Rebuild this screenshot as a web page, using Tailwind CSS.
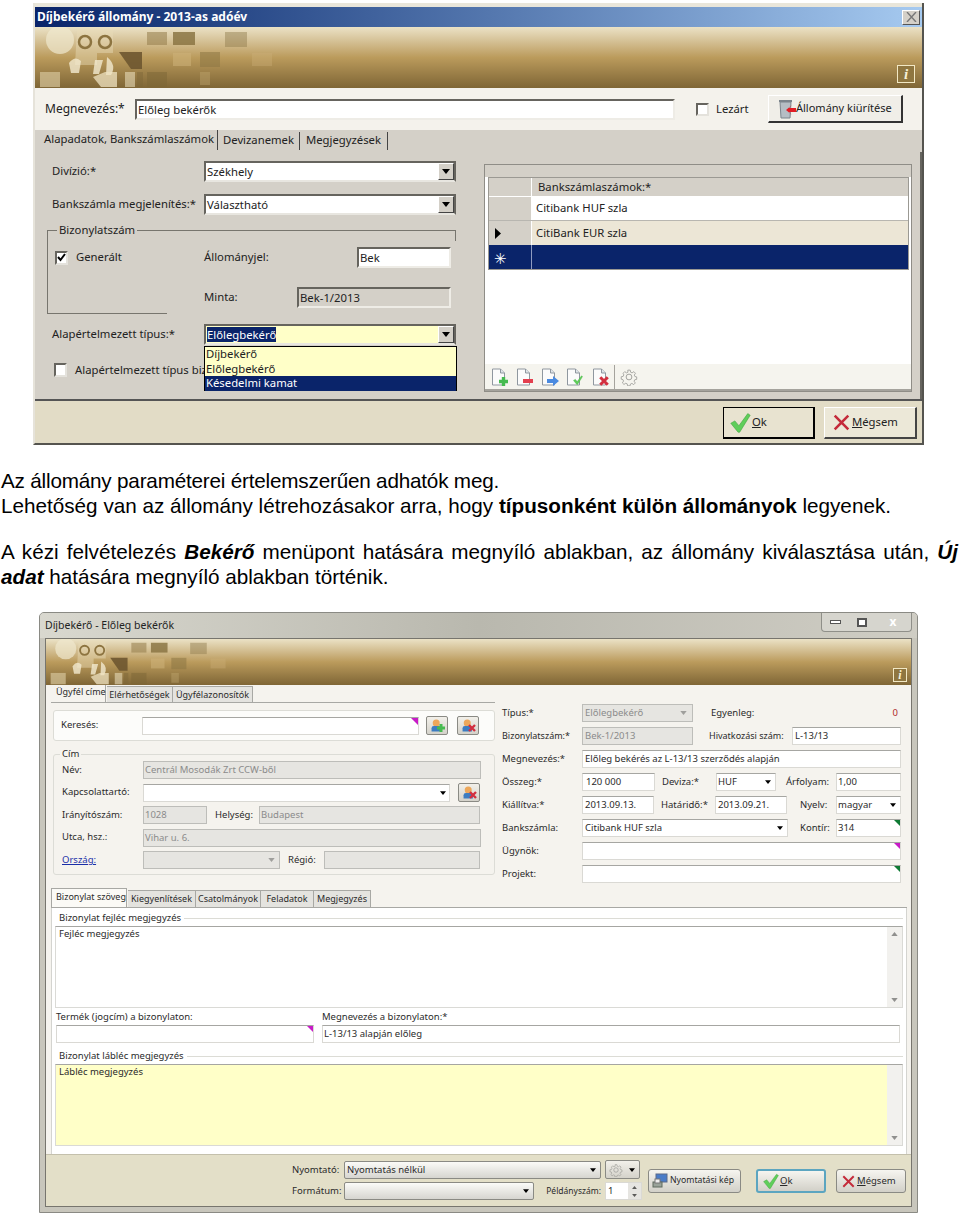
<!DOCTYPE html>
<html lang="hu">
<head>
<meta charset="utf-8"/>
<title>Díjbekérő állomány</title>
<script src="https://cdn.jsdelivr.net/npm/@tailwindcss/browser@4"></script>
</head>
<body class="bg-white w-[960px] h-[1213px] overflow-hidden font-['Liberation_Sans',Arial,sans-serif] text-black">

<!-- shared icons -->
<svg class="hidden">
  <symbol id="mosaic" viewBox="0 0 300 61">
    <circle cx="25" cy="13" r="14" fill="#f0e8cf" opacity=".7"/>
    <path d="M42 2h36v24H62v12H40z" fill="#e9dcb8" opacity=".45"/>
    <circle cx="50" cy="15" r="6" fill="none" stroke="#8d7440" stroke-width="2.5"/>
    <circle cx="70" cy="15" r="6" fill="none" stroke="#8d7440" stroke-width="2.5"/>
    <path d="M34 36q6-8 12-2l-2 12h-8zM60 33l8 0-4 14h-6zM72 30q10 8 4 18h-5z" fill="#f3ead0" opacity=".8"/>
    <rect x="112" y="5" width="20" height="13" fill="#947c4a" opacity=".55"/>
    <rect x="138" y="5" width="22" height="13" fill="#86703f" opacity=".8"/>
    <rect x="190" y="5" width="22" height="15" fill="#8f7a4c" opacity=".45"/>
    <path d="M84 25h23v17H96z" fill="#6e5730" opacity=".9"/>
    <rect x="138" y="26" width="18" height="13" fill="#cdb27a" opacity=".55"/>
    <rect x="165" y="25" width="20" height="15" fill="#8d7644" opacity=".55"/>
    <rect x="217" y="26" width="20" height="13" fill="#cdb27a" opacity=".35"/>
    <rect x="5" y="45" width="20" height="15" fill="#d5c49a" opacity=".7"/>
    <path d="M58 50l12-5h12v15H66z" fill="#efe3c2" opacity=".75"/>
    <rect x="90" y="45" width="10" height="15" fill="#efe3c2" opacity=".55"/>
    <rect x="102" y="45" width="6" height="15" fill="#7d6638" opacity=".45"/>
    <rect x="112" y="45" width="20" height="15" fill="#7c6636" opacity=".5"/>
    <rect x="165" y="45" width="10" height="13" fill="#c4aa72" opacity=".4"/>
  </symbol>
  <symbol id="tri" viewBox="0 0 8 5"><path d="M0 0h8L4 5z" fill="#000"/></symbol>
  <symbol id="doc" viewBox="0 0 16 18"><path d="M1.5 1h8l4 4v12h-12z" fill="#fbfbfb" stroke="#8f979f"/><path d="M9.5 1v4h4" fill="#dfe5ea" stroke="#8f979f"/></symbol>
  <symbol id="gear" viewBox="0 0 20 20"><g fill="none" stroke="#9a9a96"><circle cx="10" cy="10" r="3.2"/><path d="M8.5 1.5h3l.5 2.6 1.8.8 2.2-1.5 2 2-1.5 2.2.8 1.8 2.2.5v3l-2.4.5-.8 1.8 1.5 2.2-2 2-2.2-1.5-1.8.8-.5 2.2h-3l-.5-2.4-1.8-.8-2.2 1.5-2-2 1.5-2.2-.8-1.8-2.1-.5v-3l2.4-.5.8-1.8L2.7 5.4l2-2 2.2 1.5 1.8-.8z" transform="translate(1 1) scale(.9)"/></g></symbol>
  <symbol id="check" viewBox="0 0 26 26"><path d="M1 14l5-3 5 6L22 2l3 2-13 21h-2z" fill="#5fce5a" stroke="#3fa23c" stroke-width=".7"/></symbol>
  <symbol id="cross" viewBox="0 0 20 20"><path d="M2 2l16 16M18 2L2 18" stroke="#c42a3a" stroke-width="3" fill="none"/></symbol>
  <symbol id="person" viewBox="0 0 18 18"><circle cx="8" cy="5" r="4.5" fill="#eda75a"/><path d="M2 16v-4q0-3 3-3h6q3 0 3 3v4z" fill="#3d7cc0"/></symbol>
  <symbol id="badge-x" viewBox="0 0 8 8"><path d="M1 1l6 6M7 1L1 7" stroke="#d32f3f" stroke-width="2.4"/></symbol>
  <symbol id="badge-plus" viewBox="0 0 8 8"><path d="M4 0v8M0 4h8" stroke="#46bb50" stroke-width="3"/></symbol>
</svg>

<!-- first dialog -->
<div class="ml-[33px] pt-[3px] w-[891px] text-[11.3px] font-['Noto_Sans',sans-serif] text-[#222]">
  <div class="h-[442px] flex flex-col bg-[#d4d0c8] border-l-2 border-r-2 border-l-[#e6e3da] border-r-[#55544f] border-b-2 border-b-[#55544f]">
    <div class="h-[4px] bg-[#e9e6da]"></div>
    <div class="h-[20px] shrink-0 flex items-center justify-between bg-gradient-to-r from-[#0a246a] to-[#a6caf0] pl-[2px] pr-[2px]">
      <span class="text-white font-bold text-[12px]">Díjbekérő állomány - 2013-as adóév</span>
      <span class="w-[18px] h-[15px] bg-[#d4d0c8] border border-t-white border-l-white border-r-[#555] border-b-[#555] flex items-center justify-center">
        <svg class="w-[11px] h-[10px]" viewBox="0 0 11 10"><path d="M1 0l9 10M10 0L1 10" stroke="#777" stroke-width="1.4"/></svg>
      </span>
    </div>
    <div class="relative h-[61px] shrink-0 bg-gradient-to-b from-[#ebe2c6] via-[#bb9b5c] to-[#7f6636]">
      <svg class="absolute left-0 top-0 w-[300px] h-[61px]"><use href="#mosaic"/></svg>
      <span class="absolute right-[7px] top-[38px] w-[18px] h-[18px] border border-[#f2e8c4] bg-[#8f7640] text-[#f7f0d6] flex items-center justify-center font-['Liberation_Serif',serif] font-bold italic text-[15px]">i</span>
    </div>
    <div class="h-[42px] shrink-0 flex items-center bg-[#f4f2ec] pl-[10px]">
      <span class="w-[90px] text-[12px]">Megnevezés:*</span>
      <div class="w-[540px] h-[21px] bg-white border-2 border-t-[#66645e] border-l-[#66645e] border-r-[#eeece6] border-b-[#eeece6] px-[1px] leading-[17px]">Előleg bekérők</div>
      <span class="ml-[21px] w-[13px] h-[13px] bg-white border-2 border-t-[#66645e] border-l-[#66645e] border-r-[#e4e2dc] border-b-[#e4e2dc]"></span>
      <span class="ml-[7px] w-[35px]">Lezárt</span>
      <div class="ml-[17px] w-[135px] h-[28px] flex items-center pl-[9px] bg-[#f0eee8] border-t border-l border-t-white border-l-white border-r-2 border-b-2 border-r-[#333] border-b-[#333]">
        <svg class="w-[18px] h-[21px] shrink-0" viewBox="0 0 18 21"><path d="M2 4h11l-1 16H3z" fill="#b5bdc4" stroke="#7b848c"/><path d="M1 3h13" stroke="#7b848c" stroke-width="2"/><path d="M18 10h-7l3-3-6 5 6 5-3-3h7z" fill="#e21c25"/></svg>
        <span class="whitespace-nowrap ml-[0px] text-[11px]">Állomány kiürítése</span>
      </div>
    </div>
    <!-- tabs -->
    <div class="h-[20px] shrink-0 flex items-end pl-[3px]">
      <span class="w-[180px] h-[20px] pl-[6px] leading-[17px] border-r border-r-[#444] whitespace-nowrap">Alapadatok, Bankszámlaszámok</span>
      <span class="w-[82px] h-[18px] text-center leading-[16px] border-r border-r-[#444] whitespace-nowrap">Devizanemek</span>
      <span class="w-[88px] h-[18px] text-center leading-[16px] border-r border-r-[#444] whitespace-nowrap">Megjegyzések</span>
    </div>
    <!-- tab body -->
    <div class="h-[249px] shrink-0 flex">
      <div class="w-[449px] shrink-0 relative">
        <div class="ml-[17px] mt-[11px] flex items-center h-[21px]">
          <span class="w-[152px]">Divízió:*</span>
          <div class="w-[252px] h-[21px] flex bg-white border-2 border-t-[#66645e] border-l-[#66645e] border-r-[#66645e] border-b-[#e8e6e0]">
            <span class="flex-1 pl-[1px] leading-[17px]">Székhely</span>
            <span class="w-[16px] bg-[#d4d0c8] border border-t-white border-l-white border-r-[#444] border-b-[#444] flex items-center justify-center"><svg class="w-[8px] h-[5px]"><use href="#tri"/></svg></span>
          </div>
        </div>
        <div class="ml-[17px] mt-[12px] flex items-center h-[21px]">
          <span class="w-[152px] whitespace-nowrap">Bankszámla megjelenítés:*</span>
          <div class="w-[252px] h-[21px] flex bg-white border-2 border-t-[#66645e] border-l-[#66645e] border-r-[#66645e] border-b-[#e8e6e0]">
            <span class="flex-1 pl-[1px] leading-[17px]">Választható</span>
            <span class="w-[16px] bg-[#d4d0c8] border border-t-white border-l-white border-r-[#444] border-b-[#444] flex items-center justify-center"><svg class="w-[8px] h-[5px]"><use href="#tri"/></svg></span>
          </div>
        </div>
        <!-- Bizonylatszám group -->
        <div class="relative ml-[12px] mt-[15px] w-[409px] h-[84px] border-t border-l border-[#77756e]">
          <span class="absolute left-[9px] -top-[9px] bg-[#d4d0c8] px-[2px] leading-[16px]">Bizonylatszám</span>
          <span class="absolute -right-[0px] top-0 w-px h-[10px] bg-[#77756e]"></span>
          <span class="absolute left-0 bottom-0 w-[119px] h-px bg-[#77756e]"></span>
          <div class="mt-[16px] ml-[7px] h-[21px] flex items-center">
            <span class="w-[13px] h-[14px] shrink-0 bg-white border-2 border-t-[#66645e] border-l-[#66645e] border-r-[#e4e2dc] border-b-[#e4e2dc] flex items-center justify-center">
              <svg class="w-[9px] h-[9px]" viewBox="0 0 9 9"><path d="M1 4l2.5 3L8 1" fill="none" stroke="#000" stroke-width="2"/></svg>
            </span>
            <span class="ml-[8px] w-[128px]">Generált</span>
            <span class="w-[153px]">Állományjel:</span>
            <div class="w-[94px] h-[21px] bg-white border-2 border-t-[#66645e] border-l-[#66645e] border-r-[#eeece6] border-b-[#eeece6] pl-[1px] leading-[17px]">Bek</div>
          </div>
          <div class="mt-[19px] ml-[156px] h-[21px] flex items-center">
            <span class="w-[93px]">Minta:</span>
            <div class="w-[154px] h-[21px] bg-[#d4d0c8] border-2 border-t-[#66645e] border-l-[#66645e] border-r-[#eeece6] border-b-[#eeece6] pl-[1px] leading-[17px]">Bek-1/2013</div>
          </div>
        </div>
        <div class="ml-[17px] mt-[10px] flex items-center h-[21px]">
          <span class="w-[152px] whitespace-nowrap">Alapértelmezett típus:*</span>
          <div class="w-[252px] h-[21px] flex bg-[#ffffc8] border-2 border-t-[#66645e] border-l-[#66645e] border-r-[#66645e] border-b-[#e8e6e0]">
            <span class="flex-1 pl-[1px] leading-[17px]"><span class="bg-[#0a246a] text-white">Előlegbekérő</span></span>
            <span class="w-[16px] bg-[#d4d0c8] border border-t-white border-l-white border-r-[#444] border-b-[#444] flex items-center justify-center"><svg class="w-[8px] h-[5px]"><use href="#tri"/></svg></span>
          </div>
        </div>
        <div class="ml-[19px] mt-[18px] h-[14px] flex items-center">
          <span class="w-[13px] h-[14px] shrink-0 bg-white border-2 border-t-[#66645e] border-l-[#66645e] border-r-[#e4e2dc] border-b-[#e4e2dc]"></span>
          <span class="ml-[8px] whitespace-nowrap">Alapértelmezett típus bizonylat</span>
        </div>
        <!-- open combo list -->
        <div class="absolute left-[169px] top-[196px] w-[253px] h-[45px] border border-black bg-[#ffffc8] leading-[14.5px]">
          <div class="pl-[1px]">Díjbekérő</div>
          <div class="pl-[1px]">Előlegbekérő</div>
          <div class="pl-[1px] bg-[#0a246a] text-white">Késedelmi kamat</div>
        </div>
      </div>
      <!-- bank account grid -->
      <div class="w-[428px] h-[228px] mt-[14px] ml-[0px] flex flex-col bg-white border border-[#8f8d87]">
        <div class="h-[12px] bg-[#d4d0c8]"></div>
        <div class="flex flex-col ml-[3px] mr-[2px] border border-[#9b9993]">
          <div class="h-[18px] flex bg-[#d4d0c8]">
            <span class="w-[43px] border-r border-r-white"></span>
            <span class="flex-1 pl-[6px] leading-[17px]">Bankszámlaszámok:*</span>
          </div>
          <div class="h-[24px] flex bg-white">
            <span class="w-[43px] bg-[#d4d0c8] border-r border-r-white border-t border-t-white"></span>
            <span class="flex-1 pl-[4px] leading-[23px]">Citibank HUF szla</span>
          </div>
          <div class="h-[25px] flex bg-[#ece6d6] border-t border-t-[#b8b6b0]">
            <span class="w-[43px] bg-[#d4d0c8] border-r border-r-white flex items-center pl-[6px]">
              <svg class="w-[6px] h-[11px]" viewBox="0 0 6 11"><path d="M0 0l6 5.5L0 11z" fill="#000"/></svg>
            </span>
            <span class="flex-1 pl-[4px] leading-[24px]">CitiBank EUR szla</span>
          </div>
          <div class="h-[24px] flex bg-[#0a246a] text-white">
            <span class="w-[43px] border-r border-r-[#8f9bc0] pl-[5px] leading-[26px] text-[15px]">✳</span>
            <span class="flex-1"></span>
          </div>
        </div>
        <div class="mt-auto h-[27px] flex items-center bg-[#f5f4ee] border-b-2 border-b-[#a5a39d] pl-[6px]">
          <span class="relative w-[17px] h-[18px]"><svg class="w-[16px] h-[18px]"><use href="#doc"/></svg><svg class="absolute right-0 bottom-0 w-[9px] h-[9px]"><use href="#badge-plus"/></svg></span>
          <span class="relative ml-[8px] w-[17px] h-[18px]"><svg class="w-[16px] h-[18px]"><use href="#doc"/></svg><span class="absolute right-0 bottom-[3px] w-[10px] h-[4px] bg-[#e3404f]"></span></span>
          <span class="relative ml-[8px] w-[17px] h-[18px]"><svg class="w-[16px] h-[18px]"><use href="#doc"/></svg><svg class="absolute -right-[1px] bottom-0 w-[12px] h-[10px]" viewBox="0 0 12 10"><path d="M0 3h6V0l6 5-6 5V7H0z" fill="#4a8ae0"/></svg></span>
          <span class="relative ml-[8px] w-[17px] h-[18px]"><svg class="w-[16px] h-[18px]"><use href="#doc"/></svg><svg class="absolute right-0 bottom-[1px] w-[10px] h-[10px]"><use href="#check"/></svg></span>
          <span class="relative ml-[9px] w-[17px] h-[18px]"><svg class="w-[16px] h-[18px]"><use href="#doc"/></svg><svg class="absolute right-0 bottom-0 w-[10px] h-[10px]"><use href="#badge-x"/></svg></span>
          <span class="ml-[5px] w-px h-[24px] bg-[#a5a39d]"></span>
          <svg class="ml-[5px] w-[18px] h-[18px]"><use href="#gear"/></svg>
        </div>
      </div>
      <div class="w-[8px] ml-auto border-r-2 border-r-[#66645e] mt-[2px]"></div>
    </div>
    <!-- bottom bar -->
    <div class="flex-1 flex items-start justify-end gap-[9px] bg-[#e2dcc6] border-t-2 border-t-[#555] pt-[6px] pr-[5px]">
      <div class="w-[92px] h-[32px] flex items-center pl-[6px] bg-[#e8e3d0] border border-black border-r-2 border-b-2">
        <svg class="w-[21px] h-[21px]"><use href="#check"/></svg><span class="ml-[1px]"><u>O</u>k</span>
      </div>
      <div class="w-[93px] h-[32px] flex items-center pl-[8px] bg-[#ece8d8] border-t border-l border-t-white border-l-white border-r-2 border-b-2 border-r-[#444] border-b-[#444]">
        <svg class="w-[17px] h-[17px]"><use href="#cross"/></svg><span class="ml-[2px]"><u>M</u>égsem</span>
      </div>
    </div>
  </div>
</div>

<!-- text between the screenshots -->
<div class="h-[167px] pt-[24px] pl-[1px] pr-[2px] text-[20.7px] leading-[24.5px]">
  <p class="tracking-[-0.2px]">Az állomány paraméterei értelemszerűen adhatók meg.</p>
  <p>Lehetőség van az állomány létrehozásakor arra, hogy <b>típusonként külön állományok</b> legyenek.</p>
  <p class="mt-[22px] text-justify">A kézi felvételezés <b><i>Bekérő</i></b> menüpont hatására megnyíló ablakban, az állomány kiválasztása után, <b><i>Új adat</i></b> hatására megnyíló ablakban történik.</p>
</div>

<!-- second dialog -->
<div class="ml-[39px] w-[879px] h-[601px] flex flex-col bg-[#c8c6bc] border border-[#8a8a84] rounded-t-[5px] text-[9.5px] font-['Noto_Sans',sans-serif] text-[#2a2a2a] overflow-hidden">
  <div class="h-[25px] shrink-0 flex items-center justify-between pl-[5px] pr-[5px] bg-gradient-to-r from-[#d9d8cf] via-[#b9b8ae] to-[#cfcdc4]">
    <span class="text-[10.5px] text-[#222]">Díjbekérő - Előleg bekérők</span>
    <span class="h-[19px] -mt-[6px] flex items-center border border-[#8f8f89] border-t-0 rounded-b-[4px] bg-[#d6d5ce]">
      <span class="w-[26px] flex justify-center"><span class="w-[11px] h-[4px] border border-[#555] bg-white"></span></span>
      <span class="w-[27px] flex justify-center"><span class="w-[10px] h-[9px] border-2 border-[#555] bg-white"></span></span>
      <span class="w-[36px] text-center text-white font-bold text-[12px]">x</span>
    </span>
  </div>
  <div class="flex-1 mx-[5px] mb-[5px] flex flex-col bg-[#f5f3ee] border border-[#77756e]">
    <div class="relative h-[46px] shrink-0 bg-gradient-to-b from-[#ebe2c6] via-[#bb9b5c] to-[#7f6636]">
      <svg class="absolute left-0 top-0 w-[228px] h-[46px]"><use href="#mosaic"/></svg>
      <span class="absolute right-[4px] top-[29px] w-[14px] h-[14px] border border-[#f2e8c4] bg-[#8f7640] text-[#f7f0d6] flex items-center justify-center font-['Liberation_Serif',serif] font-bold italic text-[12px]">i</span>
    </div>
    <!-- upper part -->
    <div class="h-[200px] shrink-0 flex">
      <div class="w-[449px] shrink-0">
        <div class="ml-[5px] h-[18px] flex items-end border-b border-b-[#a8a8a4] text-[9px]">
          <span class="w-[55px] h-[18px] pl-[5px] leading-[15px] bg-[#f5f3ee] border-r border-r-[#a8a8a4] whitespace-nowrap">Ügyfél címe</span>
          <span class="ml-[1px] w-[66px] h-[16px] text-center leading-[15px] bg-[#e4e3df] border-r border-t border-[#a8a8a4] whitespace-nowrap">Elérhetőségek</span>
          <span class="w-[80px] h-[16px] text-center leading-[15px] bg-[#e4e3df] border-r border-t border-[#a8a8a4] whitespace-nowrap">Ügyfélazonosítók</span>
        </div>
        <div class="ml-[7px] mt-[7px] w-[442px] h-[31px] flex items-center bg-white/70 border border-[#dcdcd6] rounded-[3px] pl-[7px]">
          <span class="w-[81px]">Keresés:</span>
          <div class="relative w-[277px] h-[18px] bg-white border border-[#dad9d4] border-t-[#a6a6a2]">
            <span class="absolute right-0 top-0 w-0 h-0 border-t-[7px] border-l-[7px] border-t-[#c81bc8] border-l-transparent"></span>
          </div>
          <span class="ml-[7px] relative w-[22px] h-[19px] flex items-center justify-center bg-gradient-to-b from-[#f2f0ea] to-[#d4d2ca] border border-[#8a8a84] rounded-[2px]"><svg class="w-[14px] h-[14px]"><use href="#person"/></svg><svg class="absolute right-[2px] bottom-[2px] w-[8px] h-[8px]"><use href="#badge-plus"/></svg></span>
          <span class="ml-[9px] relative w-[22px] h-[19px] flex items-center justify-center bg-gradient-to-b from-[#f2f0ea] to-[#d4d2ca] border border-[#8a8a84] rounded-[2px]"><svg class="w-[14px] h-[14px]"><use href="#person"/></svg><svg class="absolute right-[2px] bottom-[2px] w-[8px] h-[8px]"><use href="#badge-x"/></svg></span>
        </div>
        <!-- Cím group -->
        <div class="relative ml-[7px] mt-[13px] w-[442px] h-[121px] border border-[#dcdcd6] rounded-[3px] pt-[6px] pl-[8px] flex flex-col gap-[4.5px]">
          <span class="absolute left-[6px] -top-[8px] bg-[#f5f3ee] px-[2px] leading-[14px]">Cím</span>
          <div class="h-[18px] flex items-center">
            <span class="w-[81px]">Név:</span>
            <div class="w-[338px] h-[18px] bg-[#e6e5e1] border border-[#bdbdb9] pl-[1px] leading-[16px] text-[#8b8b8b]">Centrál Mosodák Zrt CCW-ből</div>
          </div>
          <div class="h-[18px] flex items-center">
            <span class="w-[81px]">Kapcsolattartó:</span>
            <div class="w-[307px] h-[18px] flex items-center justify-end bg-white border border-[#dad9d4] border-t-[#a6a6a2] pr-[3px]"><svg class="w-[6px] h-[4px]"><use href="#tri"/></svg></div>
            <span class="ml-[8px] relative w-[22px] h-[19px] flex items-center justify-center bg-gradient-to-b from-[#f2f0ea] to-[#d4d2ca] border border-[#8a8a84] rounded-[2px]"><svg class="w-[14px] h-[14px]"><use href="#person"/></svg><svg class="absolute right-[2px] bottom-[2px] w-[8px] h-[8px]"><use href="#badge-x"/></svg></span>
          </div>
          <div class="h-[18px] flex items-center">
            <span class="w-[81px]">Irányítószám:</span>
            <div class="w-[64px] h-[18px] bg-[#e6e5e1] border border-[#bdbdb9] pl-[1px] leading-[16px] text-[#8b8b8b]">1028</div>
            <span class="w-[52px] pl-[8px]">Helység:</span>
            <div class="w-[221px] h-[18px] bg-[#e6e5e1] border border-[#bdbdb9] pl-[1px] leading-[16px] text-[#8b8b8b]">Budapest</div>
          </div>
          <div class="h-[18px] flex items-center">
            <span class="w-[81px]">Utca, hsz.:</span>
            <div class="w-[338px] h-[18px] bg-[#e6e5e1] border border-[#bdbdb9] pl-[1px] leading-[16px] text-[#8b8b8b]">Vihar u. 6.</div>
          </div>
          <div class="h-[18px] flex items-center">
            <a class="w-[81px] text-[#1a2ea8] underline">Ország:</a>
            <div class="w-[137px] h-[18px] flex items-center justify-end bg-[#e6e5e1] border border-[#bdbdb9] pr-[4px]"><svg class="w-[7px] h-[4px] opacity-30"><use href="#tri"/></svg></div>
            <span class="w-[44px] pl-[8px]">Régió:</span>
            <div class="w-[156px] h-[18px] bg-[#e6e5e1] border border-[#bdbdb9]"></div>
          </div>
        </div>
      </div>
      <!-- document fields -->
      <div class="pl-[7px] pt-[19px] flex flex-col gap-[5px]">
        <div class="h-[18px] flex items-center">
          <span class="w-[80px]">Típus:*</span>
          <div class="w-[111px] h-[18px] flex items-center justify-between bg-[#e6e5e1] border border-[#bdbdb9] pl-[2px] pr-[5px] text-[#8b8b8b]"><span>Előlegbekérő</span><svg class="w-[7px] h-[4px] opacity-30"><use href="#tri"/></svg></div>
          <span class="ml-[18px] w-[150px]">Egyenleg:</span>
          <span class="w-[39px] text-right pr-[2px] text-[#b02a2a]">0</span>
        </div>
        <div class="h-[18px] flex items-center">
          <span class="w-[80px] text-[9px] whitespace-nowrap">Bizonylatszám:*</span>
          <div class="w-[111px] h-[18px] bg-[#e6e5e1] border border-[#bdbdb9] pl-[2px] leading-[16px] text-[#8b8b8b]">Bek-1/2013</div>
          <span class="ml-[16px] w-[83px] text-[9px] whitespace-nowrap">Hivatkozási szám:</span>
          <div class="w-[109px] h-[18px] bg-white border border-[#dad9d4] border-t-[#a6a6a2] pl-[2px] leading-[16px]">L-13/13</div>
        </div>
        <div class="h-[18px] flex items-center">
          <span class="w-[80px]">Megnevezés:*</span>
          <div class="w-[319px] h-[18px] bg-white border border-[#dad9d4] border-t-[#a6a6a2] pl-[2px] leading-[16px]">Előleg bekérés az L-13/13 szerződés alapján</div>
        </div>
        <div class="h-[18px] flex items-center">
          <span class="w-[80px]">Összeg:*</span>
          <div class="w-[73px] h-[18px] bg-white border border-[#dad9d4] border-t-[#a6a6a2] pl-[3px] leading-[16px]">120 000</div>
          <span class="w-[61px] pl-[7px]">Deviza:*</span>
          <div class="w-[60px] h-[18px] flex items-center justify-between bg-white border border-[#dad9d4] border-t-[#a6a6a2] pl-[1px] pr-[4px]"><span>HUF</span><svg class="w-[6px] h-[4px]"><use href="#tri"/></svg></div>
          <span class="w-[60px] pl-[10px]">Árfolyam:</span>
          <div class="w-[65px] h-[18px] bg-white border border-[#dad9d4] border-t-[#a6a6a2] pl-[1px] leading-[16px]">1,00</div>
        </div>
        <div class="h-[18px] flex items-center">
          <span class="w-[80px]">Kiállítva:*</span>
          <div class="w-[72px] h-[18px] bg-white border border-[#dad9d4] border-t-[#a6a6a2] pl-[2px] leading-[16px]">2013.09.13.</div>
          <span class="w-[61px] pl-[7px]">Határidő:*</span>
          <div class="w-[72px] h-[18px] bg-white border border-[#dad9d4] border-t-[#a6a6a2] pl-[2px] leading-[16px]">2013.09.21.</div>
          <span class="w-[49px] pl-[13px]">Nyelv:</span>
          <div class="w-[65px] h-[18px] flex items-center justify-between bg-white border border-[#dad9d4] border-t-[#a6a6a2] pl-[1px] pr-[4px]"><span>magyar</span><svg class="w-[6px] h-[4px]"><use href="#tri"/></svg></div>
        </div>
        <div class="h-[18px] flex items-center">
          <span class="w-[80px]">Bankszámla:</span>
          <div class="w-[206px] h-[18px] flex items-center justify-between bg-white border border-[#dad9d4] border-t-[#a6a6a2] pl-[2px] pr-[4px]"><span>Citibank HUF szla</span><svg class="w-[6px] h-[4px]"><use href="#tri"/></svg></div>
          <span class="w-[48px] pl-[12px]">Kontír:</span>
          <div class="relative w-[65px] h-[18px] bg-white border border-[#dad9d4] border-t-[#a6a6a2] pl-[1px] leading-[16px]">314<span class="absolute right-0 top-0 w-0 h-0 border-t-[6px] border-l-[6px] border-t-[#0f7a34] border-l-transparent"></span></div>
        </div>
        <div class="h-[18px] flex items-center">
          <span class="w-[80px]">Ügynök:</span>
          <div class="relative w-[319px] h-[18px] bg-white border border-[#dad9d4] border-t-[#a6a6a2]"><span class="absolute right-0 top-0 w-0 h-0 border-t-[6px] border-l-[6px] border-t-[#c81bc8] border-l-transparent"></span></div>
        </div>
        <div class="h-[18px] flex items-center">
          <span class="w-[80px]">Projekt:</span>
          <div class="relative w-[319px] h-[18px] bg-white border border-[#dad9d4] border-t-[#a6a6a2]"><span class="absolute right-0 top-0 w-0 h-0 border-t-[6px] border-l-[6px] border-t-[#0f7a34] border-l-transparent"></span></div>
        </div>
      </div>
    </div>
    <!-- lower tabs -->
    <div class="mt-[4px] ml-[5px] mr-[4px] h-[19px] shrink-0 flex items-end border-b border-b-[#a8a8a4] text-[9px]">
      <span class="w-[76px] h-[19px] pl-[4px] leading-[15px] bg-[#fbfaf6] border border-b-0 border-[#a8a8a4] whitespace-nowrap">Bizonylat szöveg</span>
      <span class="ml-[1px] w-[68px] h-[17px] text-center leading-[16px] bg-[#e4e3df] border-r border-t border-[#a8a8a4] whitespace-nowrap">Kiegyenlítések</span>
      <span class="w-[65px] h-[17px] text-center leading-[16px] bg-[#e4e3df] border-r border-t border-[#a8a8a4] whitespace-nowrap">Csatolmányok</span>
      <span class="w-[53px] h-[17px] text-center leading-[16px] bg-[#e4e3df] border-r border-t border-[#a8a8a4] whitespace-nowrap">Feladatok</span>
      <span class="w-[57px] h-[17px] text-center leading-[16px] bg-[#e4e3df] border-r border-t border-[#a8a8a4] whitespace-nowrap">Megjegyzés</span>
    </div>
    <div class="flex-1 ml-[5px] mr-[4px] flex flex-col bg-white border-x border-x-[#d4d4d0] pl-[3px] pr-[3px]">
      <div class="mt-[2px] h-[16px] flex items-center pl-[4px]"><span class="whitespace-nowrap pr-[3px]">Bizonylat fejléc megjegyzés</span><span class="flex-1 h-px bg-[#dcdcd6]"></span></div>
      <div class="h-[82px] flex bg-white border border-[#dadad6] border-t-[#a6a6a2]">
        <span class="flex-1 pl-[3px]">Fejléc megjegyzés</span>
        <span class="w-[15px] flex flex-col justify-between items-center bg-[#f2f1ee] py-[5px]"><svg class="w-[7px] h-[4px] rotate-180 opacity-40"><use href="#tri"/></svg><svg class="w-[7px] h-[4px] opacity-40"><use href="#tri"/></svg></span>
      </div>
      <div class="flex mt-[1px] h-[35px]">
        <div class="w-[267px]">
          <div class="h-[16px] pl-[1px] leading-[16px]">Termék (jogcím) a bizonylaton:</div>
          <div class="relative ml-[1px] w-[258px] h-[18px] bg-white border border-[#dad9d4] border-t-[#a6a6a2]"><span class="absolute right-0 top-0 w-0 h-0 border-t-[6px] border-l-[6px] border-t-[#c81bc8] border-l-transparent"></span></div>
        </div>
        <div class="flex-1">
          <div class="h-[16px] leading-[16px]">Megnevezés a bizonylaton:*</div>
          <div class="w-[578px] h-[18px] bg-white border border-[#dad9d4] border-t-[#a6a6a2] pl-[1px] leading-[16px]">L-13/13 alapján előleg</div>
        </div>
      </div>
      <div class="mt-[4px] h-[16px] flex items-center pl-[4px]"><span class="whitespace-nowrap pr-[3px]">Bizonylat lábléc megjegyzés</span><span class="flex-1 h-px bg-[#dcdcd6]"></span></div>
      <div class="h-[82px] flex bg-[#ffffc8] border border-[#dadad6] border-t-[#a6a6a2]">
        <span class="flex-1 pl-[3px]">Lábléc megjegyzés</span>
        <span class="w-[15px] flex flex-col justify-end items-center bg-[#f2f1ee] py-[5px]"><svg class="w-[7px] h-[4px] opacity-40"><use href="#tri"/></svg></span>
      </div>
    </div>
    <!-- print bar -->
    <div class="h-[52px] shrink-0 flex items-start bg-[#e3dfc8] border-t border-t-[#c4c0ac]">
      <div class="w-[559px] shrink-0 pl-[246px] pt-[6px] flex flex-col gap-[3px]">
        <div class="h-[18px] flex items-center">
          <span class="w-[52px]">Nyomtató:</span>
          <div class="w-[257px] h-[18px] flex items-center justify-between bg-gradient-to-b from-[#fbfbf8] to-[#d6d5d0] border border-[#8a8a84] rounded-[2px] pl-[2px] pr-[4px]"><span>Nyomtatás nélkül</span><svg class="w-[6px] h-[4px]"><use href="#tri"/></svg></div>
        </div>
        <div class="h-[18px] flex items-center">
          <span class="w-[52px]">Formátum:</span>
          <div class="w-[190px] h-[18px] flex items-center justify-end bg-gradient-to-b from-[#fbfbf8] to-[#d6d5d0] border border-[#8a8a84] rounded-[2px] pr-[4px]"><svg class="w-[6px] h-[4px]"><use href="#tri"/></svg></div>
          <span class="w-[67px] text-right text-[8.5px] whitespace-nowrap">Példányszám:</span>
        </div>
      </div>
      <div class="pt-[5px] flex flex-col gap-[3px]">
        <div class="w-[35px] h-[19px] flex items-center justify-between bg-gradient-to-b from-[#f2f0ea] to-[#d4d2ca] border border-[#8a8a84] rounded-[2px] pl-[3px] pr-[4px]"><svg class="w-[14px] h-[14px]"><use href="#gear"/></svg><svg class="w-[6px] h-[4px]"><use href="#tri"/></svg></div>
        <div class="w-[37px] h-[18px] flex items-center justify-between bg-white border border-[#dad9d4] pl-[2px]"><span>1</span><span class="w-[13px] h-full flex flex-col items-center justify-around bg-[#e6e5e1]"><svg class="w-[5px] h-[3px] rotate-180 opacity-60"><use href="#tri"/></svg><svg class="w-[5px] h-[3px] opacity-60"><use href="#tri"/></svg></span></div>
      </div>
      <div class="ml-[6px] mt-[14px] w-[93px] h-[24px] flex items-center pl-[3px] bg-gradient-to-b from-[#f6f5f0] to-[#d2d0c8] border border-[#8a8a84] rounded-[3px]">
        <svg class="w-[16px] h-[16px] shrink-0" viewBox="0 0 16 16"><rect x="4" y="1" width="11" height="8" fill="#4a7cc8" stroke="#5a6a8a"/><rect x="1" y="9" width="9" height="5" fill="#9aa39a" stroke="#5e6a5e"/><rect x="3" y="6" width="5" height="4" fill="#eee" stroke="#777"/></svg>
        <span class="ml-[2px] text-[8.7px] whitespace-nowrap">Nyomtatási kép</span>
      </div>
      <div class="ml-[15px] mt-[14px] w-[70px] h-[24px] flex items-center pl-[5px] bg-gradient-to-b from-[#f6f5f0] to-[#d2d0c8] border-2 border-[#5ca5c0] rounded-[3px]">
        <svg class="w-[16px] h-[16px]"><use href="#check"/></svg><span class="ml-[1px]"><u>O</u>k</span>
      </div>
      <div class="ml-[10px] mt-[14px] w-[70px] h-[24px] flex items-center pl-[5px] bg-gradient-to-b from-[#f6f5f0] to-[#d2d0c8] border border-[#8a8a84] rounded-[3px]">
        <svg class="w-[13px] h-[13px]"><use href="#cross"/></svg><span class="ml-[2px]"><u>M</u>égsem</span>
      </div>
    </div>
  </div>
</div>
</body>
</html>
